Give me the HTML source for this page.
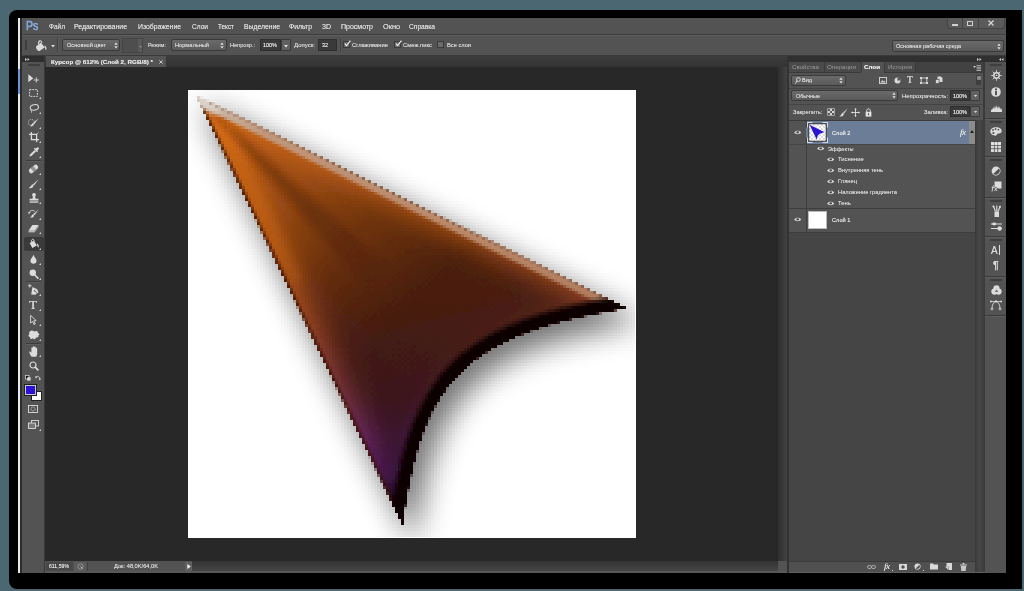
<!DOCTYPE html>
<html><head><meta charset="utf-8"><title>ps</title>
<style>
*{margin:0;padding:0;box-sizing:border-box}
html,body{width:1024px;height:591px;overflow:hidden}
body{background:#4b6771;font-family:"Liberation Sans",sans-serif;position:relative;color:#d6d6d6}
.a{position:absolute}
.t{position:absolute;white-space:nowrap;font-size:6px;line-height:8px;color:#dadada;letter-spacing:0;text-shadow:0 0 0.5px rgba(230,230,230,0.7)}
.b{font-weight:bold}
.dd{position:absolute;background:linear-gradient(#6a6a6a,#5a5a5a);border:1px solid #3a3a3a;border-radius:2px}
.inp{position:absolute;background:#3a3a3a;border:1px solid #2e2e2e}
.btn{position:absolute;background:#606060;border:1px solid #3a3a3a;border-radius:1px}
.cb{position:absolute;width:7px;height:7px;background:#6a6a6a;border:1px solid #3a3a3a}
.ln{position:absolute;background:#3a3a3a}
svg{position:absolute;overflow:visible}
</style></head><body>
<div class="a" style="left:9px;top:10px;width:1013px;height:579px;background:#000;border-radius:8px 0 0 8px"></div>
<div class="a" style="left:18px;top:18px;width:988px;height:555px;background:#535353;"></div>
<div class="a" style="left:18.1px;top:18px;width:2.3px;height:555px;background:#e8e9ee;"></div>
<div class="a" style="left:18.1px;top:69px;width:2.3px;height:25px;background:#6a94d8;"></div>
<div class="a" style="left:20.4px;top:18px;width:1.3px;height:555px;background:#2c2c2c;"></div>
<div class="a" style="left:21.7px;top:18px;width:984.3px;height:17px;background:#535353;"></div>
<div class="a" style="left:23px;top:34px;width:983px;height:1px;background:#3c3c3c;"></div>
<div class="a" style="left:23px;top:35px;width:983px;height:1px;background:#5e5e5e;"></div>
<div class="t" style="left:25.8px;top:18.8px;font-size:12.5px;line-height:15px;color:#7ea7dc;letter-spacing:0px;transform-origin:0 50%;transform:scaleX(0.84);-webkit-text-stroke:0.45px #7ea7dc">Ps</div>
<div class="t " style="transform-origin:0 50%;transform:scaleX(0.929);left:49px;top:23.4px;font-size:7px;color:#e0e0e0">Файл</div>
<div class="t " style="transform-origin:0 50%;transform:scaleX(0.994);left:74px;top:23.4px;font-size:7px;color:#e0e0e0">Редактирование</div>
<div class="t " style="transform-origin:0 50%;transform:scaleX(0.975);left:138px;top:23.4px;font-size:7px;color:#e0e0e0">Изображение</div>
<div class="t " style="transform-origin:0 50%;transform:scaleX(0.939);left:192px;top:23.4px;font-size:7px;color:#e0e0e0">Слои</div>
<div class="t " style="transform-origin:0 50%;transform:scaleX(0.908);left:218px;top:23.4px;font-size:7px;color:#e0e0e0">Текст</div>
<div class="t " style="transform-origin:0 50%;transform:scaleX(0.971);left:244px;top:23.4px;font-size:7px;color:#e0e0e0">Выделение</div>
<div class="t " style="transform-origin:0 50%;transform:scaleX(0.978);left:289px;top:23.4px;font-size:7px;color:#e0e0e0">Фильтр</div>
<div class="t " style="transform-origin:0 50%;transform:scaleX(1.005);left:322px;top:23.4px;font-size:7px;color:#e0e0e0">3D</div>
<div class="t " style="transform-origin:0 50%;transform:scaleX(1.001);left:341px;top:23.4px;font-size:7px;color:#e0e0e0">Просмотр</div>
<div class="t " style="transform-origin:0 50%;transform:scaleX(1.044);left:383px;top:23.4px;font-size:7px;color:#e0e0e0">Окно</div>
<div class="t " style="transform-origin:0 50%;transform:scaleX(0.947);left:409px;top:23.4px;font-size:7px;color:#e0e0e0">Справка</div>
<div class="a" style="left:947px;top:18px;width:58px;height:11px;background:#5a5a5a;border:1px solid #454545;border-top:none;border-radius:0 0 3px 3px"></div>
<div class="a" style="left:962px;top:18px;width:1px;height:10px;background:#454545;"></div>
<div class="a" style="left:978px;top:18px;width:1px;height:10px;background:#454545;"></div>
<div class="a" style="left:952px;top:24px;width:6px;height:2px;background:#d0d0d0;"></div>
<div class="a" style="left:967px;top:21px;width:6px;height:5px;background:transparent;border:1.3px solid #d0d0d0"></div>
<svg style="left:988px;top:20px" width="6" height="6"><path d="M0.5,0.5 L5.5,5.5 M5.5,0.5 L0.5,5.5" stroke="#d8d8d8" stroke-width="1.2"/></svg>
<div class="a" style="left:21.7px;top:36px;width:984.3px;height:19px;background:#535353;"></div>
<div class="a" style="left:25px;top:40px;width:2px;height:10px;background:#3e3e3e;"></div>
<svg style="left:35px;top:38.5px" width="13" height="13" viewBox="0 0 13 13"><path d="M1.2,7.2 L6,3.6 L9.6,8.6 L4.6,12 C2.6,12.4 0.6,9.4 1.2,7.2Z" fill="#dcdcdc"/><path d="M3.6,5.2 C3,1.6 6.4,0.4 6.8,3.8" fill="none" stroke="#dcdcdc" stroke-width="1.1"/><path d="M9.2,6.6 C11.4,7 11.8,9.2 11.2,11.2 C10,10.6 10,8.6 9.2,6.6Z" fill="#dcdcdc"/></svg>
<svg style="left:50.5px;top:44.5px" width="4" height="2.5"><path d="M0,0 L4,0 L2,2.5Z" fill="#d8d8d8"/></svg>
<div class="a" style="left:57px;top:38px;width:1px;height:14px;background:#3e3e3e;"></div>
<div class="a" style="left:58px;top:38px;width:1px;height:14px;background:#5f5f5f;"></div>
<div class="dd" style="left:62px;top:39px;width:58px;height:12px"></div>
<div class="t " style="transform-origin:0 50%;transform:scaleX(0.937);left:67px;top:41px;">Основной цвет</div>
<svg style="left:114px;top:41.5px" width="4" height="7"><path d="M0.3,2.7 L2,0.6 L3.7,2.7Z M0.3,4.3 L2,6.4 L3.7,4.3Z" fill="#e0e0e0"/></svg>
<div class="a" style="left:122px;top:38px;width:21px;height:15px;background:#4e4e4e;border:1px solid #444"></div>
<div class="a" style="left:138px;top:39px;width:4px;height:13px;background:#5a5a5a;"></div>
<svg style="left:138.5px;top:46px" width="3" height="2"><path d="M0,0 L3,0 L1.5,2Z" fill="#888"/></svg>
<div class="t " style="transform-origin:0 50%;transform:scaleX(0.892);left:148px;top:41px;">Режим:</div>
<div class="dd" style="left:171px;top:39px;width:56px;height:12px"></div>
<div class="t " style="transform-origin:0 50%;transform:scaleX(0.942);left:175px;top:41px;">Нормальный</div>
<svg style="left:220px;top:41.5px" width="4" height="7"><path d="M0.3,2.7 L2,0.6 L3.7,2.7Z M0.3,4.3 L2,6.4 L3.7,4.3Z" fill="#e0e0e0"/></svg>
<div class="t " style="transform-origin:0 50%;transform:scaleX(0.928);left:230px;top:41px;">Непрозр.:</div>
<div class="inp" style="left:260px;top:39px;width:21px;height:12px"></div>
<div class="t " style="transform-origin:0 50%;transform:scaleX(0.911);left:263px;top:41px;color:#f0f0f0">100%</div>
<div class="btn" style="left:281px;top:39px;width:10px;height:12px"></div>
<svg style="left:284px;top:44.5px" width="4" height="2.5"><path d="M0,0 L4,0 L2,2.5Z" fill="#e0e0e0"/></svg>
<div class="t " style="transform-origin:0 50%;transform:scaleX(1.002);left:294px;top:41px;">Допуск:</div>
<div class="inp" style="left:318px;top:39px;width:19px;height:12px"></div>
<div class="t " style="transform-origin:0 50%;transform:scaleX(0.897);left:322px;top:41px;color:#f0f0f0">32</div>
<div class="a" style="left:340px;top:38px;width:1px;height:14px;background:#444;"></div>
<div class="cb" style="left:343px;top:41px"></div>
<svg style="left:344px;top:40px" width="7" height="7"><path d="M0.8,3.6 L2.6,5.6 L6.4,0.6" fill="none" stroke="#f0f0f0" stroke-width="1.1"/></svg>
<div class="t " style="transform-origin:0 50%;transform:scaleX(0.971);left:352px;top:41px;">Сглаживание</div>
<div class="cb" style="left:394px;top:41px"></div>
<svg style="left:395px;top:40px" width="7" height="7"><path d="M0.8,3.6 L2.6,5.6 L6.4,0.6" fill="none" stroke="#f0f0f0" stroke-width="1.1"/></svg>
<div class="t " style="transform-origin:0 50%;transform:scaleX(0.976);left:403px;top:41px;">Смеж.пикс</div>
<div class="cb" style="left:437px;top:41px"></div>
<div class="t " style="transform-origin:0 50%;transform:scaleX(0.950);left:447px;top:41px;">Все слои</div>
<div class="dd" style="left:892px;top:40px;width:112px;height:12px"></div>
<div class="t " style="transform-origin:0 50%;transform:scaleX(0.927);left:896px;top:42px;">Основная рабочая среда</div>
<svg style="left:997px;top:42.5px" width="4" height="7"><path d="M0.3,2.7 L2,0.6 L3.7,2.7Z M0.3,4.3 L2,6.4 L3.7,4.3Z" fill="#e0e0e0"/></svg>
<div class="a" style="left:23px;top:55px;width:983px;height:1px;background:#3a3a3a;"></div>
<div class="a" style="left:21.7px;top:56px;width:23.3px;height:6px;background:#2e2e2e;"></div>
<svg style="left:25px;top:57.5px" width="5" height="3"><path d="M0,0 L2,1.5 L0,3Z M2.5,0 L4.5,1.5 L2.5,3Z" fill="#d0d0d0"/></svg>
<div class="a" style="left:45px;top:56px;width:743px;height:10.5px;background:linear-gradient(#3c3c3c,#343434);"></div>
<div class="a" style="left:46px;top:56px;width:120px;height:10.5px;background:#535353;"></div>
<div class="t b" style="transform-origin:0 50%;transform:scaleX(1.046);left:51px;top:57.5px;color:#e6e6e6">Курсор @ 612% (Слой 2, RGB/8) *</div>
<svg style="left:158.5px;top:59.5px" width="4" height="4"><path d="M0.3,0.3 L3.7,3.7 M3.7,0.3 L0.3,3.7" stroke="#d0d0d0" stroke-width="0.9"/></svg>
<div class="a" style="left:21.7px;top:62px;width:23.3px;height:511px;background:#535353;"></div>
<div class="a" style="left:44px;top:56px;width:1px;height:517px;background:#383838;"></div>
<div class="a" style="left:28px;top:64.2px;width:11.5px;height:2px;background:#3e3e3e;"></div>
<div class="a" style="left:45px;top:66.5px;width:742px;height:494.5px;background:#282828;"></div>
<div class="a" style="left:778px;top:66.5px;width:9px;height:494.5px;background:linear-gradient(90deg,#2e2e2e,#424242);"></div>
<div class="a" style="left:188px;top:90px;width:448px;height:448px;background:#fff;"></div>
<svg class="a" id="art" style="left:188px;top:90px;overflow:hidden" width="448" height="448" viewBox="188 90 448 448">
<defs>
<path id="arr" d="M195.5,95 L627.5,308.4 C456.2,335.1 422.3,387.5 402.7,525.5 Z"/>
<clipPath id="ac"><use href="#arr"/></clipPath>
<filter id="b1" x="-50%" y="-50%" width="200%" height="200%"><feGaussianBlur stdDeviation="1"/></filter>
<filter id="b2" x="-50%" y="-50%" width="200%" height="200%"><feGaussianBlur stdDeviation="2"/></filter>
<filter id="b3" x="-50%" y="-50%" width="200%" height="200%"><feGaussianBlur stdDeviation="3.5"/></filter>
<filter id="b5" x="-50%" y="-50%" width="200%" height="200%"><feGaussianBlur stdDeviation="5"/></filter>
<filter id="b9" x="-50%" y="-50%" width="200%" height="200%"><feGaussianBlur stdDeviation="9"/></filter>
<filter id="b12" x="-50%" y="-50%" width="200%" height="200%"><feGaussianBlur stdDeviation="12"/></filter>
<filter id="b16" x="-50%" y="-50%" width="200%" height="200%"><feGaussianBlur stdDeviation="15"/></filter>
<filter id="edge" x="-5%" y="-5%" width="110%" height="110%"><feGaussianBlur stdDeviation="0.55"/></filter>
<linearGradient id="g1" gradientUnits="userSpaceOnUse" x1="300" y1="95" x2="340" y2="525">
<stop offset="0" stop-color="#d66e1a"/><stop offset="0.36" stop-color="#cc641a"/><stop offset="0.5" stop-color="#b45426"/><stop offset="0.6" stop-color="#a04838"/><stop offset="0.71" stop-color="#8a3c50"/><stop offset="0.8" stop-color="#7c2e74"/><stop offset="0.89" stop-color="#561e60"/><stop offset="0.96" stop-color="#1a0820"/><stop offset="1" stop-color="#080308"/>
</linearGradient>
<linearGradient id="gd" gradientUnits="userSpaceOnUse" x1="195" y1="95" x2="500" y2="400">
<stop offset="0" stop-color="#2a0e04" stop-opacity="0.1"/><stop offset="0.3" stop-color="#2a0e04" stop-opacity="0.32"/><stop offset="0.5" stop-color="#240c05" stop-opacity="0.58"/><stop offset="0.7" stop-color="#200a06" stop-opacity="0.74"/><stop offset="0.85" stop-color="#1c0808" stop-opacity="0.7"/><stop offset="1" stop-color="#10040c" stop-opacity="0.55"/>
</linearGradient>
<linearGradient id="gw" gradientUnits="userSpaceOnUse" x1="195.5" y1="95" x2="392.5" y2="294">
<stop offset="0" stop-color="#4a1c04" stop-opacity="0.2"/><stop offset="0.07" stop-color="#4a1c04" stop-opacity="0.55"/><stop offset="0.3" stop-color="#4a1c04" stop-opacity="0.38"/><stop offset="0.6" stop-color="#40180a" stop-opacity="0.32"/><stop offset="1" stop-color="#40180a" stop-opacity="0"/>
</linearGradient>
<linearGradient id="gh" gradientUnits="userSpaceOnUse" x1="195.5" y1="95" x2="628" y2="308.5">
<stop offset="0" stop-color="#dcd6d0"/><stop offset="0.06" stop-color="#c8b6a8"/><stop offset="0.16" stop-color="#c09a80"/><stop offset="0.6" stop-color="#ba8c6e"/><stop offset="1" stop-color="#b07e60"/>
</linearGradient>
<mask id="inset" maskUnits="userSpaceOnUse" x="188" y="90" width="448" height="448">
<g filter="url(#b12)"><use href="#arr" fill="#fff"/><path d="M640,314.5 L195.5,95 L409,538" fill="none" stroke="#000" stroke-width="34" stroke-linejoin="miter"/></g>
</mask>
<filter id="pix" filterUnits="userSpaceOnUse" x="188" y="90" width="448" height="448">
<feFlood x="189" y="91" height="1" width="1"/>
<feComposite x="188" y="90" width="3" height="3"/>
<feTile result="a"/>
<feComposite in="SourceGraphic" in2="a" operator="in"/>
<feMorphology operator="dilate" radius="1"/>
<feGaussianBlur stdDeviation="0.6"/>
</filter>
</defs>
<g filter="url(#pix)">
<rect x="188" y="90" width="448" height="448" fill="#fff"/>
<!-- drop shadow -->
<g filter="url(#b16)" opacity="0.56"><use href="#arr" transform="translate(10,13)" fill="#000" stroke="#000" stroke-width="4"/></g>
<g filter="url(#edge)">
<g clip-path="url(#ac)">
<rect x="188" y="90" width="448" height="448" fill="url(#g1)"/>
<!-- left bright streak -->
<g filter="url(#b5)"><path d="M226,124 L300,282" stroke="#e87812" stroke-width="10" fill="none" opacity="0.7"/></g>
<!-- satin dark wedge from the tip along the axis -->
<g filter="url(#b3)"><path d="M200,99 L390,268 L368,290 Z" fill="url(#gw)"/></g>
<!-- dark centre -->
<rect x="188" y="90" width="448" height="448" fill="url(#gd)" mask="url(#inset)"/>
<!-- left dark thin edge -->
<g filter="url(#b1)"><path d="M195.5,95 L403,525.5" stroke="#3a1408" stroke-width="5" fill="none" opacity="0.8"/></g>
<!-- top highlight -->
<g filter="url(#b1)"><path d="M195.5,95 L627.5,308.4" stroke="url(#gh)" stroke-width="16" fill="none" opacity="0.95"/></g>
<g filter="url(#b3)"><path d="M188,91 L220,108" stroke="#ddd6d0" stroke-width="16" fill="none" opacity="0.8"/></g>
<path d="M210,102 L627.5,308.4" stroke="#6a4a3a" stroke-width="2.5" fill="none" opacity="0.6"/>
<!-- concave dark edge -->
<g filter="url(#b2)"><path d="M627.5,308.4 C456.2,335.1 422.3,387.5 402.7,525.5" stroke="#0e0404" stroke-width="27" fill="none"/></g>
</g>
</g>
</g>
</svg>

<div class="a" style="left:45px;top:561px;width:742px;height:9.5px;background:linear-gradient(#333,#454545);"></div>
<div class="a" style="left:778px;top:561px;width:9px;height:9.5px;background:#535353;"></div>
<div class="a" style="left:45px;top:570.5px;width:961px;height:2.5px;background:#585858;"></div>
<div class="a" style="left:45px;top:561px;width:147px;height:10px;background:#535353;"></div>
<div class="a" style="left:46px;top:561.5px;width:27px;height:9px;background:#484848;"></div>
<div class="t " style="transform-origin:0 50%;transform:scaleX(0.860);left:49px;top:562.3px;color:#e8e8e8">611,59%</div>
<div class="a" style="left:74px;top:561.5px;width:12px;height:9px;background:#5c5c5c;"></div>
<svg style="left:76.5px;top:562.5px" width="7" height="7" viewBox="0 0 7 7"><circle cx="3.5" cy="3.5" r="2.6" fill="none" stroke="#999" stroke-width="0.8"/><path d="M3.5,3.5 L5.6,5.6" stroke="#ccc" stroke-width="0.9"/></svg>
<div class="a" style="left:87px;top:561.5px;width:1px;height:9px;background:#444;"></div>
<div class="t " style="transform-origin:0 50%;transform:scaleX(0.947);left:114px;top:562.3px;">Док: 48,0K/64,0K</div>
<div class="a" style="left:185px;top:561.5px;width:7px;height:9px;background:#606060;"></div>
<svg style="left:186.5px;top:563.5px" width="4" height="5"><path d="M0.3,0 L3.8,2.5 L0.3,5Z" fill="#f0f0f0"/></svg>
<div class="a" style="left:787px;top:56px;width:2px;height:517px;background:#333;"></div>
<div class="a" style="left:789px;top:56px;width:217px;height:6px;background:#303030;"></div>
<svg style="left:977px;top:57.5px" width="5" height="3"><path d="M0,0 L2,1.5 L0,3Z M2.5,0 L4.5,1.5 L2.5,3Z" fill="#d0d0d0"/></svg>
<svg style="left:999px;top:57.5px" width="5" height="3"><path d="M2,0 L0,1.5 L2,3Z M4.5,0 L2.5,1.5 L4.5,3Z" fill="#d0d0d0"/></svg>
<div class="a" style="left:789px;top:62px;width:194px;height:511px;background:#535353;"></div>
<div class="a" style="left:789px;top:62px;width:194px;height:10px;background:#424242;"></div>
<div class="a" style="left:789px;top:62px;width:35px;height:10px;background:#4a4a4a;"></div>
<div class="a" style="left:824px;top:62px;width:1px;height:10px;background:#3a3a3a;"></div>
<div class="a" style="left:825px;top:62px;width:36px;height:10px;background:#4a4a4a;"></div>
<div class="a" style="left:861px;top:62px;width:1px;height:10px;background:#3a3a3a;"></div>
<div class="a" style="left:862px;top:62px;width:22px;height:10px;background:#535353;"></div>
<div class="a" style="left:884px;top:62px;width:1px;height:10px;background:#3a3a3a;"></div>
<div class="a" style="left:885px;top:62px;width:30px;height:10px;background:#4a4a4a;"></div>
<div class="a" style="left:915px;top:62px;width:1px;height:10px;background:#3a3a3a;"></div>
<div class="a" style="left:789px;top:72px;width:72px;height:1px;background:#3a3a3a;"></div>
<div class="a" style="left:884px;top:72px;width:99px;height:1px;background:#3a3a3a;"></div>
<div class="t " style="transform-origin:0 50%;transform:scaleX(1.024);left:792px;top:63px;color:#9c9c9c;text-shadow:none">Свойства</div>
<div class="t " style="transform-origin:0 50%;transform:scaleX(1.033);left:827px;top:63px;color:#9c9c9c;text-shadow:none">Операции</div>
<div class="t b" style="transform-origin:0 50%;transform:scaleX(1.037);left:864px;top:63px;color:#f0f0f0">Слои</div>
<div class="t " style="transform-origin:0 50%;transform:scaleX(1.031);left:888px;top:63px;color:#9c9c9c;text-shadow:none">История</div>
<svg style="left:973px;top:64.5px" width="8" height="6"><path d="M0,1 L3,1 L1.5,3Z" fill="#c8c8c8"/><path d="M3.5,0.7 H8 M3.5,2.3 H8 M3.5,3.9 H8 M3.5,5.5 H8" stroke="#b8b8b8" stroke-width="0.9"/></svg>
<div class="dd" style="left:791px;top:75px;width:55px;height:11px"></div>
<svg style="left:794.5px;top:77px" width="6" height="7" viewBox="0 0 6 7"><circle cx="3.4" cy="2.6" r="1.9" fill="none" stroke="#e0e0e0" stroke-width="0.9"/><path d="M2,4 L0.5,6.5" stroke="#e0e0e0" stroke-width="1"/></svg>
<div class="t " style="transform-origin:0 50%;transform:scaleX(0.921);left:802px;top:76px;">Вид</div>
<svg style="left:838.5px;top:76.5px" width="4" height="7"><path d="M0.3,2.7 L2,0.6 L3.7,2.7Z M0.3,4.3 L2,6.4 L3.7,4.3Z" fill="#e0e0e0"/></svg>
<svg style="left:879px;top:76.5px" width="8" height="7" viewBox="0 0 8 7"><rect x="0.5" y="0.5" width="7" height="6" fill="none" stroke="#d8d8d8" stroke-width="0.9"/><path d="M1.5,5.5 L3.2,3 L4.4,4.4 L5.4,3.6 L6.5,5.5Z" fill="#d8d8d8"/></svg>
<svg style="left:893.5px;top:76.5px" width="7" height="7" viewBox="0 0 7 7"><circle cx="3.5" cy="3.5" r="3" fill="#d8d8d8"/><path d="M3.5,0.5 A3,3 0 0 1 6.5,3.5 L3.5,3.5Z" fill="#555"/></svg>
<div class="t" style="transform-origin:0 50%;transform:scaleX(0.999);left:907px;top:75.5px;font-family:'Liberation Serif',serif;font-size:9.5px;line-height:9px;color:#e0e0e0">T</div>
<svg style="left:920px;top:76.5px" width="8" height="7" viewBox="0 0 8 7"><rect x="1.2" y="1" width="5.6" height="5" fill="none" stroke="#d8d8d8" stroke-width="0.9"/><rect x="0" y="0" width="2" height="2" fill="#d8d8d8"/><rect x="6" y="0" width="2" height="2" fill="#d8d8d8"/><rect x="0" y="5" width="2" height="2" fill="#d8d8d8"/><rect x="6" y="5" width="2" height="2" fill="#d8d8d8"/></svg>
<svg style="left:934.5px;top:76px" width="8" height="8" viewBox="0 0 8 8"><path d="M2.5,0.5 H6 L7.5,2 V6 H2.5Z" fill="#d8d8d8"/><rect x="0.5" y="3.5" width="3.6" height="4" fill="#d8d8d8" stroke="#535353" stroke-width="0.7"/></svg>
<div class="a" style="left:976px;top:75px;width:5px;height:10px;background:#3e3e3e;border-radius:1px"></div>
<div class="a" style="left:976.5px;top:75.5px;width:4px;height:4px;background:#8a8a8a;border-radius:1px"></div>
<div class="a" style="left:789px;top:87.5px;width:194px;height:1px;background:#444;"></div>
<div class="dd" style="left:791px;top:90px;width:107px;height:11.3px"></div>
<div class="t " style="transform-origin:0 50%;transform:scaleX(0.905);left:796px;top:91.7px;">Обычные</div>
<svg style="left:891.5px;top:92px" width="4" height="7"><path d="M0.3,2.7 L2,0.6 L3.7,2.7Z M0.3,4.3 L2,6.4 L3.7,4.3Z" fill="#e0e0e0"/></svg>
<div class="t " style="transform-origin:0 50%;transform:scaleX(0.976);left:902px;top:91.6px;">Непрозрачность:</div>
<div class="inp" style="left:950px;top:90.3px;width:19.8px;height:10.8px"></div>
<div class="t " style="transform-origin:0 50%;transform:scaleX(0.911);left:953px;top:91.8px;color:#f0f0f0">100%</div>
<div class="btn" style="left:969.8px;top:90.3px;width:10.7px;height:10.8px"></div>
<svg style="left:973.6px;top:95.2px" width="3.2" height="2"><path d="M0,0 L3.2,0 L1.6,2Z" fill="#e0e0e0"/></svg>
<div class="a" style="left:789px;top:104px;width:194px;height:1px;background:#444;"></div>
<div class="t " style="transform-origin:0 50%;transform:scaleX(0.970);left:792.5px;top:107.6px;">Закрепить:</div>
<svg style="left:826.5px;top:108px" width="8" height="8" viewBox="0 0 8 8"><rect x="0.4" y="0.4" width="7.2" height="7.2" fill="#d8d8d8"/><path d="M1,1h2v2h-2z M5,1h2v2h-2z M3,3h2v2h-2z M1,5h2v2h-2z M5,5h2v2h-2z" fill="#555"/></svg>
<svg style="left:838.5px;top:107.5px" width="9" height="9" viewBox="0 0 9 9"><path d="M8.6,0.4 L4.2,4.6 L5.2,5.6Z" fill="#e0e0e0"/><path d="M4.4,4.8 C2.4,4.4 2.6,7.6 0.3,8.3 C3,9 5.6,7.6 4.4,4.8Z" fill="#e0e0e0"/></svg>
<svg style="left:851px;top:107.5px" width="9" height="9" viewBox="0 0 9 9"><path d="M4.5,0.8 V8.2 M0.8,4.5 H8.2" stroke="#e0e0e0" stroke-width="0.9"/><path d="M4.5,0 L3.2,1.6 H5.8Z M4.5,9 L3.2,7.4 H5.8Z M0,4.5 L1.6,3.2 V5.8Z M9,4.5 L7.4,3.2 V5.8Z" fill="#e0e0e0"/></svg>
<svg style="left:865px;top:107.5px" width="7" height="9" viewBox="0 0 7 9"><path d="M1.7,4 V2.6 C1.7,0.4 5.3,0.4 5.3,2.6 V4" fill="none" stroke="#e0e0e0" stroke-width="1"/><rect x="0.6" y="3.8" width="5.8" height="4.8" fill="#e0e0e0"/><rect x="3" y="5.2" width="1" height="2" fill="#555"/></svg>
<div class="t " style="transform-origin:0 50%;transform:scaleX(0.969);left:924px;top:107.6px;">Заливка:</div>
<div class="inp" style="left:950px;top:106.3px;width:19.8px;height:10.8px"></div>
<div class="t " style="transform-origin:0 50%;transform:scaleX(0.911);left:953px;top:107.8px;color:#f0f0f0">100%</div>
<div class="btn" style="left:969.8px;top:106.3px;width:10.7px;height:10.8px"></div>
<svg style="left:973.6px;top:111.2px" width="3.2" height="2"><path d="M0,0 L3.2,0 L1.6,2Z" fill="#e0e0e0"/></svg>
<div class="a" style="left:789px;top:120px;width:186px;height:1px;background:#3a3a3a;"></div>
<div class="a" style="left:789px;top:121px;width:186px;height:111px;background:#535353;"></div>
<div class="a" style="left:975px;top:120px;width:10px;height:453px;background:linear-gradient(90deg,#393939,#474747 45%,#3a3a3a);"></div>
<div class="a" style="left:983px;top:62px;width:2px;height:58px;background:#3a3a3a;"></div>
<div class="a" style="left:806px;top:121px;width:163px;height:23px;background:#6b7d97;"></div>
<div class="a" style="left:969px;top:121px;width:6px;height:23px;background:#8c8c8c;"></div>
<svg style="left:970px;top:130px" width="4" height="3"><path d="M0,3 L4,3 L2,0Z" fill="#222"/></svg>
<div class="a" style="left:806px;top:121px;width:1px;height:111px;background:#3e3e3e;"></div>
<svg style="left:793.8px;top:130.1px" width="7.4" height="4.8" viewBox="0 0 8 5"><path d="M0.2,2.6 C1.6,0 6.4,0 7.8,2.6 C6.4,5 1.6,5 0.2,2.6Z" fill="#d8d8d8"/><circle cx="4" cy="2.3" r="1.35" fill="#484848"/><circle cx="3.5" cy="1.9" r="0.45" fill="#d8d8d8"/></svg>
<svg style="left:807px;top:122px" width="21" height="21" viewBox="0 0 21 21"><defs><pattern id="ck" width="4" height="4" patternUnits="userSpaceOnUse"><rect width="4" height="4" fill="#fff"/><rect width="2" height="2" fill="#dcdcdc"/><rect x="2" y="2" width="2" height="2" fill="#dcdcdc"/></pattern></defs>
<rect x="0.5" y="0.5" width="20" height="20" fill="none" stroke="#d4dae4" stroke-width="1"/><path d="M5.5,0 H15.5 M5.5,21 H15.5 M0,5.5 V15.5 M21,5.5 V15.5" stroke="#6b7d97" stroke-width="2.2"/><rect x="1.8" y="1.8" width="17.4" height="17.4" fill="url(#ck)" stroke="#2c2c2c" stroke-width="0.9"/>
<path d="M2.6,2.8 L17.6,10.2 C13.4,11 10.2,11.8 9.8,17.8Z" fill="#2a12d2"/></svg>
<div class="t " style="transform-origin:0 50%;transform:scaleX(0.944);left:832px;top:129px;color:#f4f4f4">Слой 2</div>
<div class="t" style="transform-origin:0 50%;transform:scaleX(0.999);left:959.5px;top:128px;font-family:'Liberation Serif',serif;font-style:italic;font-size:9px;line-height:9px;color:#e8e8e8;letter-spacing:-0.5px">fx</div>
<div class="a" style="left:789px;top:144px;width:186px;height:1px;background:#454545;"></div>
<svg style="left:816.8px;top:146.29999999999998px" width="7.4" height="4.8" viewBox="0 0 8 5"><path d="M0.2,2.6 C1.6,0 6.4,0 7.8,2.6 C6.4,5 1.6,5 0.2,2.6Z" fill="#d8d8d8"/><circle cx="4" cy="2.3" r="1.35" fill="#484848"/><circle cx="3.5" cy="1.9" r="0.45" fill="#d8d8d8"/></svg>
<div class="t " style="transform-origin:0 50%;transform:scaleX(0.935);left:828px;top:144.7px;">Эффекты</div>
<svg style="left:826.8px;top:157.0px" width="7.4" height="4.8" viewBox="0 0 8 5"><path d="M0.2,2.6 C1.6,0 6.4,0 7.8,2.6 C6.4,5 1.6,5 0.2,2.6Z" fill="#d8d8d8"/><circle cx="4" cy="2.3" r="1.35" fill="#484848"/><circle cx="3.5" cy="1.9" r="0.45" fill="#d8d8d8"/></svg>
<div class="t " style="transform-origin:0 50%;transform:scaleX(0.973);left:838px;top:155.4px;">Тиснение</div>
<svg style="left:826.8px;top:167.9px" width="7.4" height="4.8" viewBox="0 0 8 5"><path d="M0.2,2.6 C1.6,0 6.4,0 7.8,2.6 C6.4,5 1.6,5 0.2,2.6Z" fill="#d8d8d8"/><circle cx="4" cy="2.3" r="1.35" fill="#484848"/><circle cx="3.5" cy="1.9" r="0.45" fill="#d8d8d8"/></svg>
<div class="t " style="transform-origin:0 50%;transform:scaleX(0.957);left:838px;top:166.3px;">Внутренняя тень</div>
<svg style="left:826.8px;top:178.9px" width="7.4" height="4.8" viewBox="0 0 8 5"><path d="M0.2,2.6 C1.6,0 6.4,0 7.8,2.6 C6.4,5 1.6,5 0.2,2.6Z" fill="#d8d8d8"/><circle cx="4" cy="2.3" r="1.35" fill="#484848"/><circle cx="3.5" cy="1.9" r="0.45" fill="#d8d8d8"/></svg>
<div class="t " style="transform-origin:0 50%;transform:scaleX(0.962);left:838px;top:177.3px;">Глянец</div>
<svg style="left:826.8px;top:189.79999999999998px" width="7.4" height="4.8" viewBox="0 0 8 5"><path d="M0.2,2.6 C1.6,0 6.4,0 7.8,2.6 C6.4,5 1.6,5 0.2,2.6Z" fill="#d8d8d8"/><circle cx="4" cy="2.3" r="1.35" fill="#484848"/><circle cx="3.5" cy="1.9" r="0.45" fill="#d8d8d8"/></svg>
<div class="t " style="transform-origin:0 50%;transform:scaleX(0.953);left:838px;top:188.2px;">Наложение градиента</div>
<svg style="left:826.8px;top:200.5px" width="7.4" height="4.8" viewBox="0 0 8 5"><path d="M0.2,2.6 C1.6,0 6.4,0 7.8,2.6 C6.4,5 1.6,5 0.2,2.6Z" fill="#d8d8d8"/><circle cx="4" cy="2.3" r="1.35" fill="#484848"/><circle cx="3.5" cy="1.9" r="0.45" fill="#d8d8d8"/></svg>
<div class="t " style="transform-origin:0 50%;transform:scaleX(0.976);left:838px;top:198.9px;">Тень</div>
<div class="a" style="left:789px;top:208px;width:186px;height:1px;background:#3e3e3e;"></div>
<svg style="left:793.8px;top:217.29999999999998px" width="7.4" height="4.8" viewBox="0 0 8 5"><path d="M0.2,2.6 C1.6,0 6.4,0 7.8,2.6 C6.4,5 1.6,5 0.2,2.6Z" fill="#d8d8d8"/><circle cx="4" cy="2.3" r="1.35" fill="#484848"/><circle cx="3.5" cy="1.9" r="0.45" fill="#d8d8d8"/></svg>
<div class="a" style="left:808px;top:211px;width:19px;height:18px;background:#fff;border:0.5px solid #bbb"></div>
<div class="t " style="transform-origin:0 50%;transform:scaleX(0.944);left:832px;top:215.8px;color:#f0f0f0">Слой 1</div>
<div class="a" style="left:789px;top:231.5px;width:186px;height:1px;background:#3e3e3e;"></div>
<div class="a" style="left:789px;top:232.5px;width:186px;height:328.5px;background:#454545;"></div>
<div class="a" style="left:789px;top:560.5px;width:186px;height:1px;background:#3a3a3a;"></div>
<div class="a" style="left:789px;top:561.5px;width:186px;height:10.5px;background:#505050;"></div>
<div class="a" style="left:789px;top:572px;width:217px;height:1px;background:#606060;"></div>
<svg style="left:866.5px;top:564.5px" width="9" height="4" viewBox="0 0 9 4"><rect x="0.5" y="0.5" width="4" height="3" rx="1.5" fill="none" stroke="#b0b0b0" stroke-width="0.9"/><rect x="4.5" y="0.5" width="4" height="3" rx="1.5" fill="none" stroke="#b0b0b0" stroke-width="0.9"/></svg>
<div class="t" style="transform-origin:0 50%;transform:scaleX(0.999);left:883.5px;top:561.5px;font-family:'Liberation Serif',serif;font-style:italic;font-size:9px;line-height:9px;color:#e8e8e8;letter-spacing:-0.5px">fx</div>
<div class="a" style="left:891.5px;top:569.5px;width:1.5px;height:1px;background:#d0d0d0;"></div>
<svg style="left:898.5px;top:563.5px" width="8" height="6" viewBox="0 0 8 6"><rect width="8" height="6" fill="#d8d8d8"/><circle cx="4" cy="3" r="1.7" fill="#505050"/></svg>
<svg style="left:914px;top:563px" width="7" height="7" viewBox="0 0 7 7"><circle cx="3.5" cy="3.5" r="3" fill="#d8d8d8"/><path d="M1.4,5.6 A3,3 0 0 0 5.6,1.4Z" fill="#505050" stroke="#d8d8d8" stroke-width="0.5"/></svg>
<div class="a" style="left:922.5px;top:569.5px;width:1.5px;height:1px;background:#d0d0d0;"></div>
<svg style="left:929.5px;top:563px" width="8" height="7" viewBox="0 0 8 7"><path d="M0,0.5 H3 L4,1.6 H8 V6.5 H0Z" fill="#d8d8d8"/></svg>
<svg style="left:945px;top:563px" width="7" height="7" viewBox="0 0 7 7"><path d="M1.5,0 H7 V7 H3.6 V3.4 H1.5Z" fill="#d8d8d8"/><path d="M0,3.6 H3.4 V7Z" fill="#d8d8d8"/></svg>
<svg style="left:960px;top:562.5px" width="7" height="8" viewBox="0 0 7 8"><path d="M0,2 H7 M2.5,0.6 H4.5" stroke="#d0d0d0" stroke-width="1.1"/><path d="M0.8,3 H6.2 L5.7,8 H1.3Z" fill="#c8c8c8"/></svg>
<div class="a" style="left:985px;top:62px;width:21px;height:511px;background:#535353;"></div>
<div class="a" style="left:989.5px;top:64.3px;width:12px;height:2px;background:#3e3e3e;"></div>
<div class="a" style="left:985px;top:117.5px;width:21px;height:1px;background:#3a3a3a;"></div>
<div class="a" style="left:985px;top:118.5px;width:21px;height:1px;background:#5e5e5e;"></div>
<div class="a" style="left:989.5px;top:120.8px;width:12px;height:2px;background:#3e3e3e;"></div>
<div class="a" style="left:985px;top:156px;width:21px;height:1px;background:#3a3a3a;"></div>
<div class="a" style="left:985px;top:157px;width:21px;height:1px;background:#5e5e5e;"></div>
<div class="a" style="left:989.5px;top:159.3px;width:12px;height:2px;background:#3e3e3e;"></div>
<div class="a" style="left:985px;top:196.5px;width:21px;height:1px;background:#3a3a3a;"></div>
<div class="a" style="left:985px;top:197.5px;width:21px;height:1px;background:#5e5e5e;"></div>
<div class="a" style="left:989.5px;top:199.8px;width:12px;height:2px;background:#3e3e3e;"></div>
<div class="a" style="left:985px;top:236px;width:21px;height:1px;background:#3a3a3a;"></div>
<div class="a" style="left:985px;top:237px;width:21px;height:1px;background:#5e5e5e;"></div>
<div class="a" style="left:989.5px;top:239.3px;width:12px;height:2px;background:#3e3e3e;"></div>
<div class="a" style="left:985px;top:275.5px;width:21px;height:1px;background:#3a3a3a;"></div>
<div class="a" style="left:985px;top:276.5px;width:21px;height:1px;background:#5e5e5e;"></div>
<div class="a" style="left:989.5px;top:278.8px;width:12px;height:2px;background:#3e3e3e;"></div>
<div class="a" style="left:985px;top:314.5px;width:21px;height:1px;background:#3a3a3a;"></div>
<div class="a" style="left:985px;top:315.5px;width:21px;height:1px;background:#5e5e5e;"></div>
<svg style="left:990.9px;top:70.3px" width="11" height="11" viewBox="0 0 11 11"><circle cx="5.5" cy="5.5" r="2.7" fill="none" stroke="#dcdcdc" stroke-width="1.5"/><circle cx="5.5" cy="5.5" r="0.8" fill="#dcdcdc"/><path d="M5.5,0.2 V2.4 M5.5,8.6 V10.8 M0.2,5.5 H2.4 M8.6,5.5 H10.8 M1.7,1.7 L3.3,3.3 M7.7,7.7 L9.3,9.3 M9.3,1.7 L7.7,3.3 M1.7,9.3 L3.3,7.7" stroke="#dcdcdc" stroke-width="1" opacity="0.85"/></svg>
<svg style="left:991.4px;top:86.8px" width="10" height="10" viewBox="0 0 10 10"><circle cx="5" cy="5" r="4.8" fill="#dcdcdc"/><rect x="4.1" y="4" width="1.8" height="4.2" fill="#4a4a4a"/><circle cx="5" cy="2.4" r="1.05" fill="#4a4a4a"/></svg>
<svg style="left:990.7px;top:104.5px" width="11" height="7" viewBox="0 0 11 7"><path d="M0,7 V4.8 L0.8,4.8 L1.2,3.2 L1.8,4.6 L2.6,1.8 L3.2,4 L4,0.6 L4.8,3.6 L5.6,0.2 L6.4,3.4 L7.2,0.8 L8,3.8 L8.8,1.6 L9.4,4.2 L10.2,3 L10.6,4.8 L11,4.8 V7Z" fill="#dcdcdc"/></svg>
<svg style="left:990.0px;top:126.5px" width="12" height="9" viewBox="0 0 12 9"><path d="M6,0.3 C2.5,0.3 0.3,2.2 0.3,4.6 C0.3,7 2.8,8.7 5.6,8.7 C7.2,8.7 6.6,6.8 8,6.6 C10,6.4 11.7,6 11.7,4 C11.7,1.8 9.2,0.3 6,0.3Z" fill="#dcdcdc"/><circle cx="3" cy="3" r="0.9" fill="#535353"/><circle cx="5.6" cy="2" r="0.9" fill="#535353"/><circle cx="8.4" cy="2.6" r="0.9" fill="#535353"/><circle cx="3.4" cy="6" r="1.1" fill="#535353"/></svg>
<svg style="left:991.0px;top:142.2px" width="10" height="10" viewBox="0 0 10 10"><rect width="10" height="10" fill="#dcdcdc"/><path d="M3.4,0 V10 M6.7,0 V10 M0,3.4 H10 M0,6.7 H10" stroke="#535353" stroke-width="0.8"/><rect x="0.5" y="0.5" width="9" height="2.5" fill="#f0f0f0" opacity="0.5"/></svg>
<svg style="left:991.0px;top:165.7px" width="10" height="10" viewBox="0 0 10 10"><circle cx="5" cy="5" r="4.4" fill="#dcdcdc"/><path d="M1.9,8.1 A4.4,4.4 0 0 0 8.1,1.9Z" fill="#535353" stroke="#dcdcdc" stroke-width="0.6"/></svg>
<svg style="left:990.5px;top:181.0px" width="11" height="11" viewBox="0 0 11 11"><rect x="3.5" y="0.5" width="7" height="7" fill="#dcdcdc"/><path d="M3.4,4.4 C2.2,4 2,5.4 1.8,6.6 L1,10.6 M0.6,6.4 H3.4 M3.6,6.6 L6,10 M6,6.6 L3.4,10" fill="none" stroke="#535353" stroke-width="1.9"/><path d="M3.4,4.4 C2.2,4 2,5.4 1.8,6.6 L1,10.6 M0.6,6.4 H3.4 M3.6,6.6 L6,10 M6,6.6 L3.4,10" fill="none" stroke="#f0f0f0" stroke-width="0.8"/></svg>
<svg style="left:991.5px;top:205.0px" width="9" height="12" viewBox="0 0 9 12"><rect x="2.5" y="6.5" width="4.5" height="5.5" fill="#dcdcdc"/><path d="M3.5,6.5 L1.5,1 M4.8,6.5 V0.5 M6,6.5 L8,1.5" stroke="#dcdcdc" stroke-width="1.1"/><circle cx="1.4" cy="1.4" r="1" fill="#dcdcdc"/><circle cx="8" cy="1.8" r="1" fill="#dcdcdc"/></svg>
<svg style="left:990.5px;top:222.2px" width="11" height="9" viewBox="0 0 11 9"><path d="M0,2 H11 M0,6.5 H11" stroke="#dcdcdc" stroke-width="1.1"/><ellipse cx="3.2" cy="2" rx="2" ry="1.4" fill="#dcdcdc"/><circle cx="8.6" cy="6.5" r="2.2" fill="#dcdcdc"/></svg>
<div class="t" style="transform-origin:0 50%;transform:scaleX(0.999);left:990.5px;top:244.5px;font-size:10px;line-height:11px;color:#dcdcdc;letter-spacing:0">A</div>
<div class="a" style="left:998.6px;top:245px;width:0.9px;height:9.5px;background:#dcdcdc;"></div>
<div class="t b" style="transform-origin:0 50%;transform:scaleX(0.999);left:992.5px;top:260px;font-size:10px;line-height:11px;color:#dcdcdc;letter-spacing:0">¶</div>
<svg style="left:990.5px;top:284.5px" width="11" height="10" viewBox="0 0 11 10"><circle cx="5.5" cy="3.4" r="3.1" fill="#dcdcdc"/><circle cx="3.4" cy="6.6" r="3.1" fill="#dcdcdc"/><circle cx="7.6" cy="6.6" r="3.1" fill="#dcdcdc"/><path d="M5.5,4.2 L3.8,7 H7.2Z" fill="#535353" opacity="0.8"/></svg>
<svg style="left:990.0px;top:300.4px" width="12" height="10" viewBox="0 0 12 10"><path d="M2,9 C2,3 5,1.5 6,1.5 C7,1.5 10,3 10,9" fill="none" stroke="#dcdcdc" stroke-width="0.9"/><path d="M0.5,1.5 H11.5" stroke="#dcdcdc" stroke-width="0.8"/><rect x="5" y="0.5" width="2" height="2" fill="#dcdcdc"/><circle cx="0.9" cy="1.5" r="0.9" fill="#dcdcdc"/><circle cx="11.1" cy="1.5" r="0.9" fill="#dcdcdc"/><circle cx="2" cy="9" r="1" fill="none" stroke="#dcdcdc" stroke-width="0.7"/><circle cx="10" cy="9" r="1" fill="none" stroke="#dcdcdc" stroke-width="0.7"/></svg>
<svg style="left:28.0px;top:73.5px" width="11" height="9" viewBox="0 0 11 9"><path d="M0.3,0.3 L5.3,4.2 L0.3,8.2Z" fill="#dcdcdc"/><path d="M8.3,3.4 V8.6 M5.7,6 H10.9" stroke="#dcdcdc" stroke-width="0.9"/></svg>
<svg style="left:29.0px;top:89.0px" width="9" height="8" viewBox="0 0 9 8"><rect x="0.6" y="0.6" width="7.8" height="6.8" fill="none" stroke="#dcdcdc" stroke-width="1" stroke-dasharray="1.7 1.1"/></svg>
<svg style="left:38.8px;top:97px" width="2" height="2"><path d="M2,0 V2 H0Z" fill="#d0d0d0"/></svg>
<svg style="left:28.5px;top:103.5px" width="10" height="9" viewBox="0 0 10 9"><ellipse cx="5.4" cy="3.4" rx="4.2" ry="2.7" fill="none" stroke="#dcdcdc" stroke-width="1" transform="rotate(-12 5.4 3.4)"/><path d="M2,5.2 C1.6,6.6 3,7 2.4,8.6" fill="none" stroke="#dcdcdc" stroke-width="0.9"/></svg>
<svg style="left:38.8px;top:112px" width="2" height="2"><path d="M2,0 V2 H0Z" fill="#d0d0d0"/></svg>
<svg style="left:28.0px;top:118.3px" width="11" height="9" viewBox="0 0 11 9"><path d="M10.6,0.3 L5.2,4.8 L6.4,6Z" fill="#dcdcdc"/><path d="M5.4,5 C3.6,4.8 3.8,7.4 2,8 C4.4,8.8 6.6,7.4 5.4,5Z" fill="#dcdcdc"/><ellipse cx="3.4" cy="4.6" rx="3" ry="3.2" fill="none" stroke="#dcdcdc" stroke-width="0.7" stroke-dasharray="1.2 0.9"/></svg>
<svg style="left:38.8px;top:126.8px" width="2" height="2"><path d="M2,0 V2 H0Z" fill="#d0d0d0"/></svg>
<svg style="left:28.5px;top:132.3px" width="10" height="10" viewBox="0 0 10 10"><path d="M2.4,0 V7.6 H10 M0,2.4 H7.6 V10" fill="none" stroke="#dcdcdc" stroke-width="1.3"/><path d="M9.5,0.5 L7.6,2.4" stroke="#dcdcdc" stroke-width="0.7"/></svg>
<svg style="left:38.8px;top:141.3px" width="2" height="2"><path d="M2,0 V2 H0Z" fill="#d0d0d0"/></svg>
<svg style="left:28.5px;top:147.2px" width="10" height="10" viewBox="0 0 10 10"><path d="M9.6,0.4 C8.6,-0.2 7.6,0.4 6.6,1.6 L5.6,1 L4.8,1.8 L8.2,5.2 L9,4.4 L8.4,3.4 C9.6,2.4 10.2,1.4 9.6,0.4Z" fill="#dcdcdc"/><path d="M5.6,3 L1,7.6 L0.4,9.6 L2.4,9 L7,4.4Z" fill="#dcdcdc"/></svg>
<svg style="left:38.8px;top:156.2px" width="2" height="2"><path d="M2,0 V2 H0Z" fill="#d0d0d0"/></svg>
<div class="a" style="left:26px;top:160px;width:15px;height:1px;background:#3c3c3c;"></div>
<div class="a" style="left:26px;top:161px;width:15px;height:1px;background:#5e5e5e;"></div>
<svg style="left:28.0px;top:164.0px" width="11" height="10" viewBox="0 0 11 10"><g transform="rotate(-40 5.5 5)"><rect x="0.3" y="2.6" width="10.4" height="4.8" rx="2.2" fill="#dcdcdc"/><rect x="3.8" y="2.6" width="3.4" height="4.8" fill="#535353" opacity="0.55"/></g></svg>
<svg style="left:38.8px;top:173px" width="2" height="2"><path d="M2,0 V2 H0Z" fill="#d0d0d0"/></svg>
<svg style="left:28.0px;top:179.0px" width="11" height="10" viewBox="0 0 11 10"><path d="M10.6,0.3 L4.8,5.4 L6,6.6Z" fill="#dcdcdc"/><path d="M5,5.6 C3,5.2 3.2,8.2 0.6,9 C3.4,9.8 6.4,8.4 5,5.6Z" fill="#dcdcdc"/></svg>
<svg style="left:38.8px;top:188px" width="2" height="2"><path d="M2,0 V2 H0Z" fill="#d0d0d0"/></svg>
<svg style="left:28.5px;top:193.2px" width="10" height="10" viewBox="0 0 10 10"><circle cx="5" cy="2" r="1.9" fill="#dcdcdc"/><path d="M4,3.4 H6 L6.6,5.8 H9.4 V7.6 H0.6 V5.8 H3.4Z" fill="#dcdcdc"/><rect x="0.6" y="8.4" width="8.8" height="1.3" fill="#dcdcdc"/></svg>
<svg style="left:38.8px;top:202.2px" width="2" height="2"><path d="M2,0 V2 H0Z" fill="#d0d0d0"/></svg>
<svg style="left:28.0px;top:209.0px" width="11" height="10" viewBox="0 0 11 10"><path d="M10.6,0.6 L5.4,5 L6.6,6.2Z" fill="#dcdcdc"/><path d="M5.6,5.2 C3.8,4.8 4,7.6 1.6,8.4 C4.2,9.2 7,7.8 5.6,5.2Z" fill="#dcdcdc"/><path d="M1,4.2 C1.4,1.4 5,0.6 6.8,2.4" fill="none" stroke="#dcdcdc" stroke-width="0.9"/><path d="M0,3 L1,5 L2.6,3.6Z" fill="#dcdcdc"/></svg>
<svg style="left:38.8px;top:218px" width="2" height="2"><path d="M2,0 V2 H0Z" fill="#d0d0d0"/></svg>
<svg style="left:28.0px;top:223.8px" width="11" height="9" viewBox="0 0 11 9"><path d="M4.4,1 H10.6 L6.8,6.4 H0.6Z" fill="#dcdcdc"/><path d="M0.6,6.4 H6.8 V8.4 H0.6Z" fill="#dcdcdc" opacity="0.75"/><path d="M6.8,6.4 L10.6,1 V3 L6.8,8.4Z" fill="#dcdcdc" opacity="0.55"/></svg>
<svg style="left:38.8px;top:232.3px" width="2" height="2"><path d="M2,0 V2 H0Z" fill="#d0d0d0"/></svg>
<div class="a" style="left:24px;top:236.5px;width:20px;height:14.5px;background:#3a3a3a;border-radius:2px"></div>
<svg style="left:27.5px;top:238.1px" width="12" height="11" viewBox="0 0 12 11"><path d="M1.6,5 L6,2.6 L8.8,7.4 L4.4,10 Z" fill="#dcdcdc"/><path d="M3.4,3.8 C3,1 5.8,0.2 6.2,2.8" fill="none" stroke="#dcdcdc" stroke-width="1"/><path d="M8.6,5.4 C10.6,5.8 11,7.8 10.6,9.6 C9.4,9.2 9.4,7.2 8.6,5.4Z" fill="#dcdcdc"/></svg>
<svg style="left:38.8px;top:247.6px" width="2" height="2"><path d="M2,0 V2 H0Z" fill="#d0d0d0"/></svg>
<svg style="left:30.0px;top:254.3px" width="7" height="10" viewBox="0 0 7 10"><path d="M3.5,0.2 C3.5,2.6 0.4,4.4 0.4,6.8 C0.4,8.6 1.8,9.8 3.5,9.8 C5.2,9.8 6.6,8.6 6.6,6.8 C6.6,4.4 3.5,2.6 3.5,0.2Z" fill="#dcdcdc"/></svg>
<svg style="left:38.8px;top:263.3px" width="2" height="2"><path d="M2,0 V2 H0Z" fill="#d0d0d0"/></svg>
<svg style="left:28.5px;top:268.5px" width="10" height="10" viewBox="0 0 10 10"><circle cx="3.8" cy="3.8" r="3.2" fill="#dcdcdc"/><path d="M5.8,6 L9.4,9.6" stroke="#dcdcdc" stroke-width="1.6"/></svg>
<svg style="left:38.8px;top:277.5px" width="2" height="2"><path d="M2,0 V2 H0Z" fill="#d0d0d0"/></svg>
<div class="a" style="left:26px;top:281px;width:15px;height:1px;background:#3c3c3c;"></div>
<div class="a" style="left:26px;top:282px;width:15px;height:1px;background:#5e5e5e;"></div>
<svg style="left:27.5px;top:284.2px" width="12" height="11" viewBox="0 0 12 11"><path d="M4.4,3 L9.2,5.2 L10.4,8.4 L7.2,10.8 L3.2,10.4Z" fill="#dcdcdc"/><path d="M6.8,7 L10,10.4" stroke="#535353" stroke-width="0.8"/><circle cx="6.6" cy="6.8" r="0.8" fill="#535353"/><path d="M1.8,0 V3.6 M0,1.8 H3.6" stroke="#dcdcdc" stroke-width="0.9"/></svg>
<svg style="left:38.8px;top:293.7px" width="2" height="2"><path d="M2,0 V2 H0Z" fill="#d0d0d0"/></svg>
<div class="t" style="transform-origin:0 50%;transform:scaleX(0.999);left:28.5px;top:298px;font-family:'Liberation Serif',serif;font-size:13.5px;line-height:14px;color:#dcdcdc;letter-spacing:0">T</div>
<svg style="left:38.8px;top:309px" width="2" height="2"><path d="M2,0 V2 H0Z" fill="#d0d0d0"/></svg>
<svg style="left:30.0px;top:315.2px" width="7" height="10" viewBox="0 0 7 10"><path d="M0.6,0.4 L6.2,5.6 L3.8,5.8 L5.2,9 L4,9.6 L2.6,6.4 L0.6,8Z" fill="none" stroke="#dcdcdc" stroke-width="0.9"/></svg>
<svg style="left:38.8px;top:324.2px" width="2" height="2"><path d="M2,0 V2 H0Z" fill="#d0d0d0"/></svg>
<svg style="left:27.5px;top:330.4px" width="12" height="10" viewBox="0 0 12 10"><path d="M3.6,0.6 C5,0 5.6,1.8 7,1.4 C8.6,0.8 10,1 9.6,2.8 C11.4,3.2 12,5 10.2,5.6 C11,7.2 9.4,8 8.2,7.2 C7.6,9 5.8,10 5,8.2 C3.6,9.4 1.4,9 2.2,7 C0.2,6.8 -0.2,4.8 1.6,4.2 C0.4,2.6 2,1 3.6,0.6Z" fill="#dcdcdc"/></svg>
<svg style="left:38.8px;top:339.4px" width="2" height="2"><path d="M2,0 V2 H0Z" fill="#d0d0d0"/></svg>
<div class="a" style="left:26px;top:343px;width:15px;height:1px;background:#3c3c3c;"></div>
<div class="a" style="left:26px;top:344px;width:15px;height:1px;background:#5e5e5e;"></div>
<svg style="left:28.0px;top:345.5px" width="11" height="11" viewBox="-1 0 11 11"><path d="M2.6,10.8 C1.6,8.8 0.2,7.4 0.3,6 C0.6,5.2 1.6,5.6 2.4,6.8 V2 C2.4,1 3.8,1 3.8,2 V5 V1 C3.8,0 5.3,0 5.3,1 V5 V1.2 C5.3,0.3 6.8,0.3 6.8,1.2 V5.2 V2.4 C6.8,1.5 8.2,1.5 8.2,2.4 V7.4 C8.2,9 7.6,9.8 7.2,10.8Z" fill="#dcdcdc"/></svg>
<svg style="left:38.8px;top:355px" width="2" height="2"><path d="M2,0 V2 H0Z" fill="#d0d0d0"/></svg>
<svg style="left:28.5px;top:361.0px" width="10" height="10" viewBox="0 0 10 10"><circle cx="4" cy="4" r="3" fill="none" stroke="#dcdcdc" stroke-width="1.2"/><path d="M6.2,6.2 L9.4,9.4" stroke="#dcdcdc" stroke-width="1.7"/></svg>
<svg style="left:25px;top:374.5px" width="6" height="6"><rect x="0.4" y="0.4" width="3.6" height="3.6" fill="#111" stroke="#dcdcdc" stroke-width="0.7"/><rect x="2.2" y="2.2" width="3.4" height="3.4" fill="#dcdcdc"/></svg>
<svg style="left:35px;top:374.5px" width="6" height="6"><path d="M1,2.4 C1.6,0.8 4.4,0.8 4.8,3.6" fill="none" stroke="#dcdcdc" stroke-width="0.8"/><path d="M0,1.2 L1,3.4 L2.4,1.8Z M3.6,3.4 L4.8,5.4 L6,3.4Z" fill="#dcdcdc"/></svg>
<div class="a" style="left:31px;top:390.5px;width:10.5px;height:10.5px;background:#fff;border:0.5px solid #222"></div>
<div class="a" style="left:25px;top:384.5px;width:10.5px;height:10.5px;background:#2a12d6;border:0.5px solid #c8c8c8;outline:0.5px solid #222"></div>
<svg style="left:28px;top:405px" width="10" height="8"><rect x="0.5" y="0.5" width="9" height="7" fill="none" stroke="#dcdcdc" stroke-width="0.9"/><circle cx="5" cy="4" r="2" fill="none" stroke="#dcdcdc" stroke-width="0.9" stroke-dasharray="1 0.6"/></svg>
<svg style="left:27.5px;top:420px" width="11" height="9"><rect x="3.5" y="0.5" width="7" height="5.5" fill="#535353" stroke="#dcdcdc" stroke-width="0.9"/><rect x="0.5" y="3" width="7" height="5.5" fill="#777" stroke="#dcdcdc" stroke-width="0.9"/></svg>
<svg style="left:38.8px;top:429px" width="2" height="2"><path d="M2,0 V2 H0Z" fill="#d0d0d0"/></svg>
</body></html>
